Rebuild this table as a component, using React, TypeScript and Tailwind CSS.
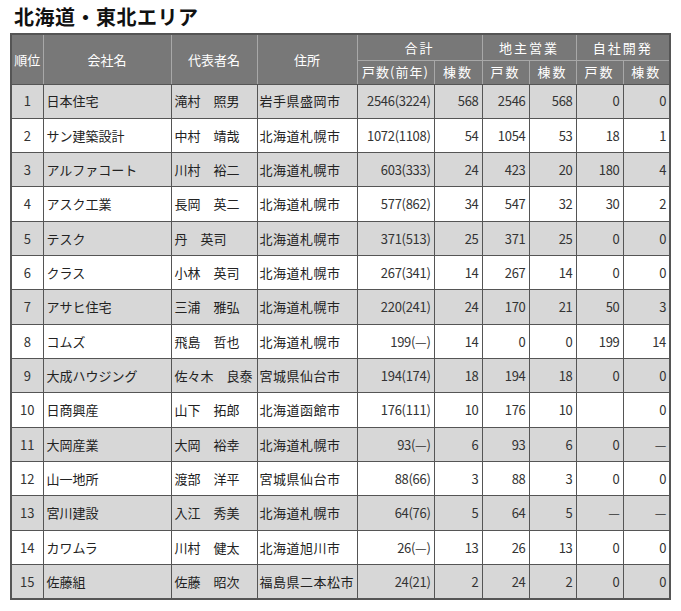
import React from "react";

type Row = [string, string, string, string, string, string, string, string, string, string];

const rows: Row[] = [
  ["1", "日本住宅", "滝村　照男", "岩手県盛岡市", "2546(3224)", "568", "2546", "568", "0", "0"],
  ["2", "サン建築設計", "中村　靖哉", "北海道札幌市", "1072(1108)", "54", "1054", "53", "18", "1"],
  ["3", "アルファコート", "川村　裕二", "北海道札幌市", "603(333)", "24", "423", "20", "180", "4"],
  ["4", "アスク工業", "長岡　英二", "北海道札幌市", "577(862)", "34", "547", "32", "30", "2"],
  ["5", "テスク", "丹　英司", "北海道札幌市", "371(513)", "25", "371", "25", "0", "0"],
  ["6", "クラス", "小林　英司", "北海道札幌市", "267(341)", "14", "267", "14", "0", "0"],
  ["7", "アサヒ住宅", "三浦　雅弘", "北海道札幌市", "220(241)", "24", "170", "21", "50", "3"],
  ["8", "コムズ", "飛島　哲也", "北海道札幌市", "199(—)", "14", "0", "0", "199", "14"],
  ["9", "大成ハウジング", "佐々木　良泰", "宮城県仙台市", "194(174)", "18", "194", "18", "0", "0"],
  ["10", "日商興産", "山下　拓郎", "北海道函館市", "176(111)", "10", "176", "10", "", "0"],
  ["11", "大岡産業", "大岡　裕幸", "北海道札幌市", "93(—)", "6", "93", "6", "0", "—"],
  ["12", "山一地所", "渡部　洋平", "宮城県仙台市", "88(66)", "3", "88", "3", "0", "0"],
  ["13", "宮川建設", "入江　秀美", "北海道札幌市", "64(76)", "5", "64", "5", "—", "—"],
  ["14", "カワムラ", "川村　健太", "北海道旭川市", "26(—)", "13", "26", "13", "0", "0"],
  ["15", "佐藤組", "佐藤　昭次", "福島県二本松市", "24(21)", "2", "24", "2", "0", "0"],
];

const font = { fontFamily: '"Noto Sans CJK JP", "Noto Sans", sans-serif' };

export default function App() {
  return (
    <div className="w-[681px] h-[611px] bg-white text-[#222]" style={font}>
      <div className="pl-[14px] pt-[3px] h-[33px] text-[20px] font-bold leading-[28px] text-[#111] tracking-[0.5px]">
        北海道・東北エリア
      </div>
      <table className="ml-[10px] w-[659px] table-fixed border-collapse border-2 border-[#555] text-[13px]">
        <colgroup>
          <col className="w-[32px]" />
          <col className="w-[128px]" />
          <col className="w-[86px]" />
          <col className="w-[100px]" />
          <col className="w-[77px]" />
          <col className="w-[48px]" />
          <col className="w-[47px]" />
          <col className="w-[47px]" />
          <col className="w-[47px]" />
          <col className="w-[47px]" />
        </colgroup>
        <thead className="bg-[#787878] text-white">
          <tr className="h-[26px]">
            <th rowSpan={2} className="border border-[#a8a8a8] border-b-[#555] font-normal text-center px-0">順位</th>
            <th rowSpan={2} className="border border-[#a8a8a8] border-b-[#555] font-normal text-center">会社名</th>
            <th rowSpan={2} className="border border-[#a8a8a8] border-b-[#555] font-normal text-center">代表者名</th>
            <th rowSpan={2} className="border border-[#a8a8a8] border-b-[#555] font-normal text-center">住所</th>
            <th colSpan={2} className="border border-[#a8a8a8] font-normal text-center tracking-[2px]">合計</th>
            <th colSpan={2} className="border border-[#a8a8a8] font-normal text-center tracking-[2px]">地主営業</th>
            <th colSpan={2} className="border border-[#a8a8a8] font-normal text-center tracking-[2px]">自社開発</th>
          </tr>
          <tr className="h-[24px]">
            <th className="border border-[#a8a8a8] border-b-[#555] font-normal text-center tracking-[1px] px-0">戸数(前年)</th>
            <th className="border border-[#a8a8a8] border-b-[#555] font-normal text-center tracking-[2px]">棟数</th>
            <th className="border border-[#a8a8a8] border-b-[#555] font-normal text-center tracking-[2px]">戸数</th>
            <th className="border border-[#a8a8a8] border-b-[#555] font-normal text-center tracking-[2px]">棟数</th>
            <th className="border border-[#a8a8a8] border-b-[#555] font-normal text-center tracking-[2px]">戸数</th>
            <th className="border border-[#a8a8a8] border-b-[#555] font-normal text-center tracking-[2px]">棟数</th>
          </tr>
        </thead>
        <tbody>
          {rows.map((r, i) => (
            <tr key={r[0]} className={`h-[34.33px] ${i % 2 === 0 ? "bg-[#d7d7d7]" : "bg-white"}`}>
              <td className="border border-[#555] text-center text-[#333]">{r[0]}</td>
              <td className="border border-[#555] pl-[3px] whitespace-nowrap overflow-hidden">{r[1]}</td>
              <td className="border border-[#555] pl-[3px] whitespace-nowrap overflow-hidden">{r[2]}</td>
              <td className="border border-[#555] pl-[2px] whitespace-nowrap overflow-hidden tracking-[0.5px]">{r[3]}</td>
              {r.slice(4).map((v, j) => (
                <td key={j} className="border border-[#555] text-right pr-[3px] whitespace-nowrap tracking-[-0.3px] text-[#333]">
                  {v}
                </td>
              ))}
            </tr>
          ))}
        </tbody>
      </table>
    </div>
  );
}
